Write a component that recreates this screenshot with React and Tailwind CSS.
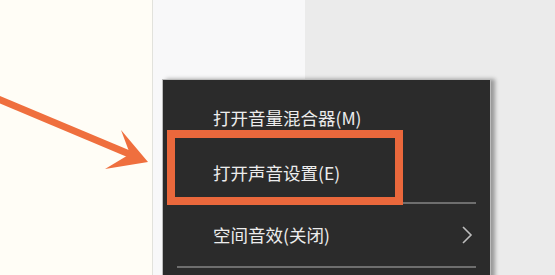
const font = { fontFamily: '"Noto Sans CJK SC", "Noto Sans", sans-serif' };

const Row = ({ label, height, chevron }) => (
    <div className="flex items-center pl-[50px] pr-[17px] text-[17.5px] text-[#ededed]" style={{ height }}>
        <span className="flex-1">{label}</span>
        {chevron && (
            <svg width="12" height="20" viewBox="0 0 12 20" fill="none">
                <path d="M2 2 L10 10 L2 18" stroke="#bdbdbd" strokeWidth="1.6" />
            </svg>
        )}
    </div>
);

const Separator = () => <div className="mx-[14px] h-[2px] bg-[#6e6e6e]" />;

export default function App() {
    return (
        <div className="relative w-[555px] h-[275px] overflow-hidden flex" style={font}>
            {/* backgrounds */}
            <div className="w-[153px] h-full bg-[#fffdf6] border-r border-[#e2e2dc]" />
            <div className="w-[152px] h-full bg-[#f8f8f9]" />
            <div className="flex-1 h-full bg-[#ebebeb]" />

            {/* arrow */}
            <svg className="absolute left-0 top-0" width="160" height="180" viewBox="0 0 160 180">
                <line x1="-4" y1="98" x2="134" y2="156" stroke="#ef6f3e" strokeWidth="7" />
                <path d="M121 130 L148 162 L105 169 L130 154 Z" fill="#ef6f3e" />
            </svg>

            {/* context menu */}
            <div className="absolute left-[162px] top-[79px] w-[329px] h-[220px] bg-[#2b2b2b] border border-[#bcbcbc] shadow-[4px_0_4px_rgba(0,0,0,0.35)]">
                <div className="h-[11px]" />
                <Row label="打开音量混合器(M)" height={54} />
                <Row label="打开声音设置(E)" height={57} />
                <Separator />
                <Row label="空间音效(关闭)" height={62} chevron />
                <Separator />
            </div>

            {/* highlight box */}
            <div className="absolute left-[167px] top-[130px] w-[236px] h-[75px] border-[8px] border-[#ea683c]" />
        </div>
    );
}
